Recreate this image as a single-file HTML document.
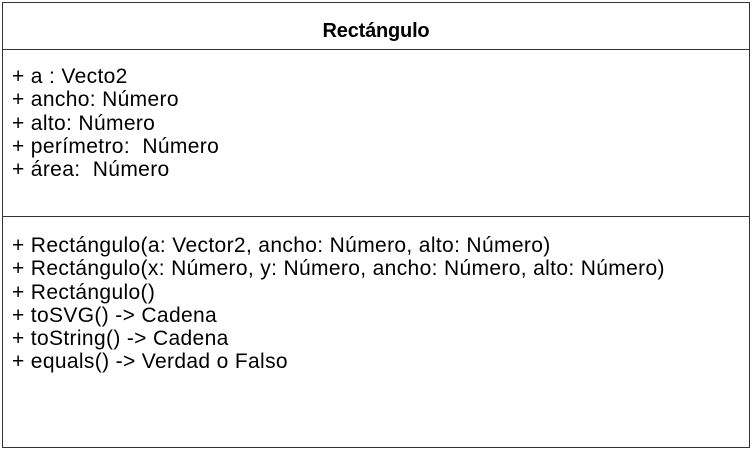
<!DOCTYPE html>
<html><head><style>
body{margin:0;width:756px;height:455px;background:#fff;font-family:"Liberation Sans",Arial,sans-serif;color:#000;position:relative;overflow:hidden}
.box{position:absolute;left:2px;top:2px;width:746px;height:444px;border:1px solid #333}
.h{position:absolute;left:0;right:0;top:0;height:46px;border-bottom:1px solid #333;text-align:center;font-weight:bold;font-size:20px;line-height:56px;letter-spacing:-0.2px}
.d{position:absolute;left:0;right:0;top:213px;border-top:1px solid #333}
.t{position:absolute;left:9px;font-size:21px;line-height:23.3px;white-space:pre;letter-spacing:0.35px}
</style></head><body>
<div class="box">
<div class="h">Rectángulo</div>
<div class="t" style="top:62px">+ a : Vecto2
+ ancho: Número
+ alto: Número
+ perímetro:  Número
+ área:  Número</div>
<div class="d"></div>
<div class="t" style="top:231px">+ Rectángulo(a: Vector2, ancho: Número, alto: Número)
+ Rectángulo(x: Número, y: Número, ancho: Número, alto: Número)
+ Rectángulo()
+ toSVG() -&gt; Cadena
+ toString() -&gt; Cadena
+ equals() -&gt; Verdad o Falso</div>
</div>
</body></html>
